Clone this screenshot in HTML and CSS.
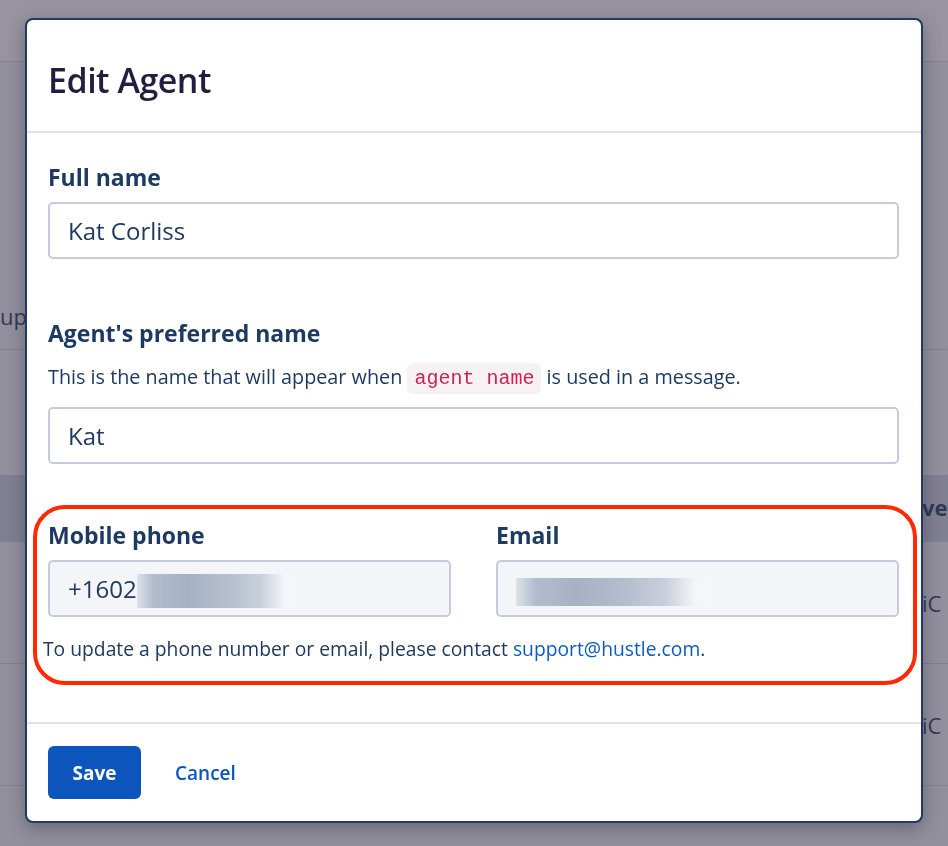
FILE: index.html
```html
<!DOCTYPE html>
<html lang="en">
  <head>
    <meta charset="UTF-8" />
    <title>Edit Agent</title>
    <link rel="stylesheet" href="styles.css">
  </head>
  <body>
    <div class="page">
      <div class="page-top"></div>
      <div class="page-row row-1"><span class="cell-left">up</span></div>
      <div class="page-row row-2"></div>
      <div class="page-head"><span class="cell-right head-text">ve</span></div>
      <div class="page-row row-3"><span class="cell-right">iC</span></div>
      <div class="page-row row-4"><span class="cell-right">iC</span></div>
    </div>

    <div class="modal">
      <header class="modal-header">
        <h1>Edit Agent</h1>
      </header>
      <div class="modal-body">
        <div class="field">
          <label for="full-name">Full name</label>
          <input id="full-name" class="text-input" type="text" value="Kat Corliss">
        </div>
        <div class="field field-pref">
          <label for="pref-name">Agent's preferred name</label>
          <p class="help">This is the name that will appear when <code>agent name</code> is used in a message.</p>
          <input id="pref-name" class="text-input" type="text" value="Kat">
        </div>
        <div class="contact">
          <div class="contact-grid">
            <div class="field">
              <label>Mobile phone</label>
              <div class="text-input locked">+1602<span class="blur blur-phone"></span></div>
            </div>
            <div class="field">
              <label>Email</label>
              <div class="text-input locked"><span class="blur blur-email"></span></div>
            </div>
          </div>
          <p class="contact-note">To update a phone number or email, please contact <a href="#">support@hustle.com</a>.</p>
        </div>
      </div>
      <footer class="modal-footer">
        <button class="btn-save">Save</button>
        <a class="btn-cancel" href="#">Cancel</a>
      </footer>
    </div>
  </body>
</html>
```

FILE: styles.css
```css
* {
  box-sizing: border-box;
}
body {
  margin: 0;
  font-family: 'Open Sans', 'Noto Sans', sans-serif;
  background-color: #ffffff;
  overflow: hidden;
}

/* page behind the dialog, already dimmed */
.page {
  height: 846px;
  background-color: #93909d;
  color: #2f3a55;
  font-size: 22px;
}
.page-top {
  height: 62px;
  border-bottom: 1px solid #84828f;
  background-color: #97949f;
}
.page-row {
  display: flex;
  align-items: center;
  justify-content: space-between;
  border-bottom: 1px solid #84828f;
}
.row-1 {
  height: 288px;
  align-items: flex-end;
  padding-bottom: 18px;
}
.row-2 {
  height: 125px;
  border-bottom: none;
}
.page-head {
  height: 67px;
  background-color: #817f92;
  display: flex;
  align-items: center;
  justify-content: flex-end;
}
.row-3,
.row-4 {
  height: 122px;
  justify-content: flex-end;
}
.cell-left {
  margin-left: 0;
}
.cell-right {
  width: 26px;
  overflow: hidden;
  white-space: nowrap;
}
.head-text {
  font-weight: 700;
  margin-bottom: 4px;
}

/* dialog */
.modal {
  position: fixed;
  left: 25px;
  top: 18px;
  width: 898px;
  height: 805px;
  background-color: white;
  border: 2px solid #1f3a63;
  border-radius: 8px;
  box-shadow: 0 6px 18px rgba(30, 30, 50, 0.35);
  display: flex;
  flex-direction: column;
}
.modal-header {
  padding: 39px 21px 30px;
  border-bottom: 2px solid #dfe3ed;
}
.modal-header h1 {
  margin: 0;
  font-size: 34px;
  line-height: 42px;
  font-weight: 600;
  color: #221e3f;
  letter-spacing: -0.5px;
}
.modal-body {
  padding: 30px 22px 0 21px;
  flex-grow: 1;
}
.field {
  display: flex;
  flex-direction: column;
  margin-bottom: 60px;
}
.field-pref {
  margin-bottom: 57px;
}
.field label {
  font-size: 23px;
  line-height: 28px;
  font-weight: 700;
  color: #1d3a63;
  margin-bottom: 11px;
}
.help {
  margin: 3px 0 13px;
  font-size: 19.8px;
  line-height: 31px;
  color: #1f3a60;
}
code {
  font-family: 'Liberation Mono', monospace;
  font-size: 20px;
  color: #cc2350;
  background-color: #f8f1f4;
  border-radius: 6px;
  padding: 4px 7px;
}
.text-input {
  height: 57px;
  border: 2px solid #c4cbda;
  border-radius: 5px;
  padding: 0 18px;
  font-family: inherit;
  font-size: 24px;
  color: #1f3a60;
  background-color: white;
  display: flex;
  align-items: center;
}
.text-input.locked {
  background-color: #f3f5f9;
}
.blur {
  display: inline-block;
  height: 34px;
  background: linear-gradient(90deg, #dde2ea 0%, #b2bccd 10%, #a6b1c4 30%, #b5bece 55%, #c9d0dc 75%, #f4f6fa 90%, #f3f5f9 100%);
  border-radius: 2px;
}
.blur-phone {
  width: 165px;
  margin-top: 4px;
}
.blur-email {
  width: 200px;
  height: 28px;
  margin-top: 6px;
}

/* phone + email block with the red call-out */
.contact {
  position: relative;
}
.contact::before {
  content: '';
  position: absolute;
  left: -15px;
  right: -18px;
  top: -16px;
  bottom: -23px;
  border: 4px solid #ff2a00;
  border-radius: 32px;
  pointer-events: none;
}
.contact-grid {
  display: grid;
  grid-template-columns: 1fr 1fr;
  gap: 45px;
}
.contact-grid .field {
  margin-bottom: 0;
}
.contact-note {
  margin: 19px 0 0 -5px;
  font-size: 19.3px;
  line-height: 26px;
  color: #1f3a60;
}
.contact-note a {
  color: #0b5cc2;
  text-decoration: none;
}

.modal-footer {
  border-top: 2px solid #dfe3ed;
  padding: 22px 21px 22px;
  display: flex;
  align-items: center;
  gap: 34px;
}
.btn-save {
  width: 93px;
  height: 53px;
  border: none;
  border-radius: 6px;
  background-color: #0b55bd;
  color: white;
  font-family: inherit;
  font-size: 19px;
  font-weight: 700;
}
.btn-cancel {
  color: #0b55bd;
  font-size: 19px;
  font-weight: 600;
  text-decoration: none;
}
```
